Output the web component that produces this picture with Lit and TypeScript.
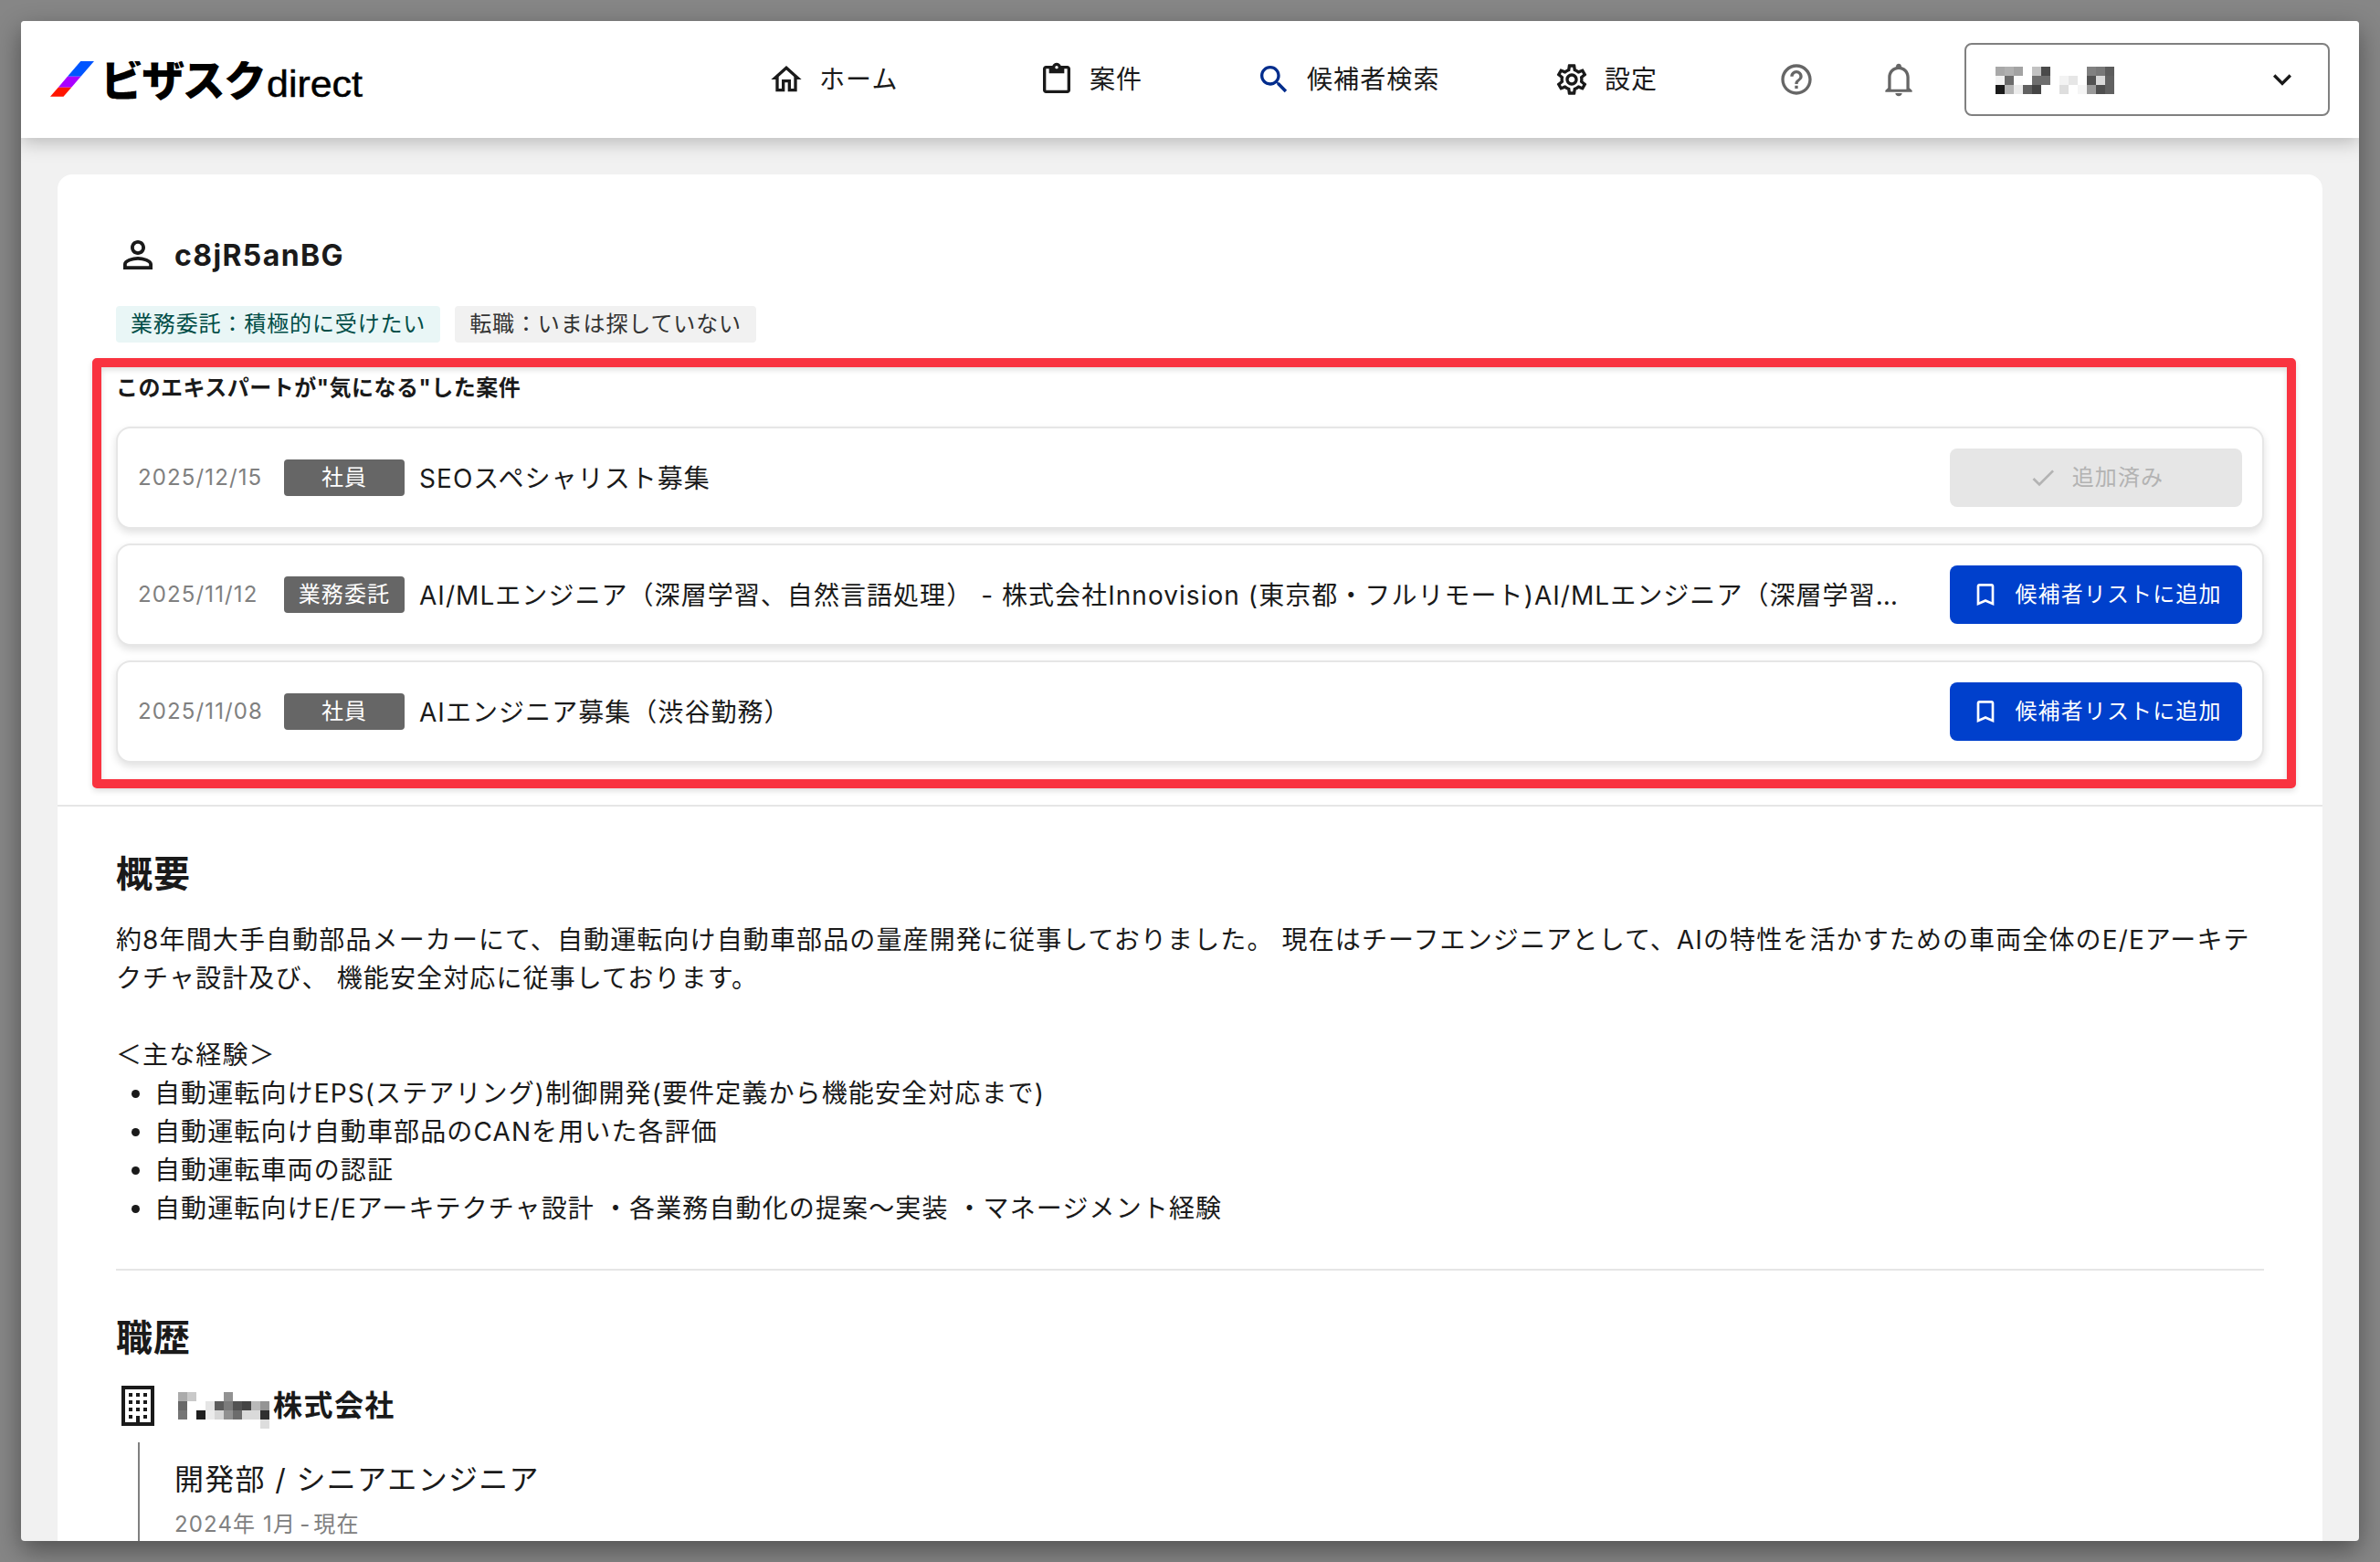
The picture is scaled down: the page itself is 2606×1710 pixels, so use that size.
import { LitElement, html, css, svg } from "lit";
import { customElement } from "lit/decorators.js";

const paths = {
  home: "M12 5.69l5 4.5V18h-2v-6H9v6H7v-7.81l5-4.5M12 3L2 12h3v8h6v-6h2v6h6v-8h3L12 3z",
  clip: "M19 3h-4.18C14.4 1.84 13.3 1 12 1S9.6 1.84 9.18 3H5c-1.1 0-2 .9-2 2v14c0 1.100.9 2 2 2h14c1.100 0 2-.9 2-2V5c0-1.100-.9-2-2-2zm-7 0c.55 0 1 .45 1 1s-.45 1-1 1-1-.45-1-1 .45-1 1-1zm7 16H5V5h2v3h10V5h2v14z",
  search: "M15.5 14h-.79l-.28-.27C15.410 12.590 16 11.110 16 9.500 16 5.910 13.090 3 9.500 3S3 5.910 3 9.500 5.910 16 9.500 16c1.610 0 3.090-.59 4.230-1.570l.27.28v.79l5 4.990L20.490 19l-4.990-5zm-6 0C7.010 14 5 11.990 5 9.500S7.010 5 9.500 5 14 7.010 14 9.500 11.990 14 9.500 14z",
  gear: "M19.430 12.980c.04-.32.07-.64.07-.98 0-.34-.03-.66-.07-.98l2.110-1.650c.19-.15.24-.42.12-.64l-2-3.460c-.09-.16-.26-.25-.44-.25-.06 0-.12.01-.17.03l-2.490 1c-.52-.4-1.080-.73-1.690-.98l-.38-2.650C14.460 2.180 14.250 2 14 2h-4c-.25 0-.46.18-.49.42l-.38 2.650c-.61.25-1.170.59-1.690.98l-2.490-1c-.06-.02-.12-.03-.18-.03-.17 0-.34.09-.43.25l-2 3.460c-.13.22-.07.49.12.64l2.110 1.650c-.04.32-.07.65-.07.98s.03.66.07.98l-2.110 1.650c-.19.15-.24.42-.12.64l2 3.460c.09.16.26.25.44.25.06 0 .12-.01.17-.03l2.490-1c.52.4 1.080.73 1.690.98l.38 2.650c.03.24.24.42.49.42h4c.25 0 .46-.18.49-.42l.38-2.650c.61-.25 1.170-.59 1.690-.98l2.490 1c.06.02.12.03.18.03.17 0 .34-.09.43-.25l2-3.460c.12-.22.07-.49-.12-.64l-2.110-1.650zm-1.980-1.710c.04.31.05.52.05.73 0 .21-.02.43-.05.73l-.14 1.130.89.7 1.080.84-.7 1.210-1.270-.51-1.040-.42-.9.68c-.43.32-.84.56-1.250.73l-1.060.43-.16 1.130-.2 1.350h-1.400l-.19-1.350-.16-1.130-1.060-.43c-.43-.18-.83-.41-1.230-.71l-.91-.7-1.060.43-1.270.51-.7-1.210 1.080-.84.89-.7-.14-1.130c-.03-.31-.05-.54-.05-.74s.02-.43.05-.73l.14-1.130-.89-.7-1.080-.84.7-1.210 1.270.51 1.040.42.9-.68c.43-.32.84-.56 1.250-.73l1.060-.43.16-1.130.2-1.350h1.390l.19 1.350.16 1.130 1.060.43c.43.18.83.41 1.230.71l.91.7 1.060-.43 1.270-.51.7 1.210-1.070.85-.89.7.14 1.130zM12 8c-2.210 0-4 1.790-4 4s1.790 4 4 4 4-1.790 4-4-1.790-4-4-4zm0 6c-1.100 0-2-.9-2-2s.9-2 2-2 2 .9 2 2-.9 2-2 2z",
  help: "M11 18h2v-2h-2v2zm1-16C6.480 2 2 6.480 2 12s4.480 10 10 10 10-4.480 10-10S17.520 2 12 2zm0 18c-4.410 0-8-3.590-8-8s3.590-8 8-8 8 3.590 8 8-3.590 8-8 8zm0-14c-2.210 0-4 1.790-4 4h2c0-1.100.9-2 2-2s2 .9 2 2c0 2-3 1.750-3 5h2c0-2.250 3-2.500 3-5 0-2.210-1.790-4-4-4z",
  bell: "M12 2.600C11.100 2.600 10.400 3.300 10.400 4.100V4.400C7.600 5.100 5.600 7.600 5.600 10.700V17L4 18.600V19.500H20V18.600L18.400 17V10.700C18.400 7.600 16.400 5.100 13.600 4.400V4.100C13.600 3.300 12.900 2.600 12 2.600zM7.400 17.900V10.700C7.400 8 9.400 6 12 6S16.600 8 16.600 10.700V17.900zM10 20.200H14C14 21.200 13.100 22 12 22S10 21.200 10 20.200z",
  down: "M16.590 8.590L12 13.170 7.410 8.590 6 10l6 6 6-6z",
  person: "M12 5.900c1.160 0 2.100.94 2.100 2.100s-.94 2.100-2.100 2.100S9.900 9.160 9.900 8s.94-2.100 2.100-2.100m0 9c2.970 0 6.100 1.460 6.100 2.100v1.100H5.900V17c0-.64 3.130-2.100 6.100-2.100M12 4C9.790 4 8 5.790 8 8s1.790 4 4 4 4-1.790 4-4-1.790-4-4-4zm0 9c-2.670 0-8 1.340-8 4v3h16v-3c0-2.660-5.330-4-8-4z",
  bookmark: "M17 3H7c-1.100 0-2 .9-2 2v16l7-3 7 3V5c0-1.100-.9-2-2-2zm0 15l-5-2.180L7 18V5h10v13z",
  check: "M9 16.170L4.830 12l-1.420 1.410L9 19 21 7l-1.410-1.410z",
  building: "M3 1H21V23H3zM5 3V21H11V17.500H13V21H19V3zM7 5H9V7H7zM11 5H13V7H11zM15 5H17V7H15zM7 9H9V11H7zM11 9H13V11H11zM15 9H17V11H15zM7 13H9V15H7zM11 13H13V15H11zM15 13H17V15H15zM7 17H9V19H7zM15 17H17V19H15z",
};
type Name = keyof typeof paths;

const icon = (name: Name, cls = "i40") =>
  html`<svg class="icon ${cls}" viewBox="0 0 24 24"><path fill-rule="evenodd" d=${paths[name]}></path></svg>`;

/* Redacted text drawn as a grid of grey cells; "" is transparent. */
const mosaic = (rows: string[][], w: number, h: number) => html`<svg
  class="mosaic" shape-rendering="crispEdges" width=${rows[0].length * w} height=${rows.length * h}>
  ${rows.map((r, y) => r.map((c, x) => (c ? svg`<rect x=${x * w} y=${y * h} width=${w} height=${h} fill=${"#" + c}></rect>` : null)))}
</svg>`;

const accountCells = [
  ["a8a8a8", "b0b0b0", "a3a3a3", "", "c2c2c2", "4a4a4a", "", "", "", "", "808080", "787878", "5c5c5c"],
  ["f2f2f2", "6b6b6b", "fcfcfc", "", "6e6e6e", "6e6e6e", "", "f3f3f3", "e6e6e6", "", "525252", "d9d9d9", "616161"],
  ["1a1a1a", "b5b5b5", "ebebeb", "616161", "454545", "", "", "dedede", "", "f5f5f5", "999999", "4f4f4f", "616161"],
];
const companyCells = [
  ["ababab", "c9c9c9", "", "", "", "929292", "", "", "", ""],
  ["686868", "", "", "e5e5e5", "5c5c5c", "7b7b7b", "525252", "444444", "b9b9b9", "949494"],
  ["757575", "", "1f1f1f", "ebebeb", "d6d6d6", "909090", "6c6c6c", "dadada", "dadada", "303030"],
  ["", "", "", "", "", "", "", "", "", "dddddd"],
];

const jobs = [
  { date: "2025/12/15", kind: "社員", title: "SEOスペシャリスト募集", added: true },
  {
    date: "2025/11/12",
    kind: "業務委託",
    title: "AI/MLエンジニア（深層学習、自然言語処理） - 株式会社Innovision (東京都・フルリモート)AI/MLエンジニア（深層学習、自然言語処理）",
    added: false,
  },
  { date: "2025/11/08", kind: "社員", title: "AIエンジニア募集（渋谷勤務）", added: false },
];

@customElement("app-root")
export class AppRoot extends LitElement {
  static styles = css`
    :host {
      display: block;
      box-sizing: border-box;
      width: 2606px;
      height: 1710px;
      padding: 23px;
      overflow: hidden;
      background: #868686;
      font-family: Inter, "Noto Sans CJK JP", sans-serif;
      font-size: 28px;
      line-height: 42px;
      letter-spacing: 0.04em;
      color: #1a1a1a;
    }
    * { box-sizing: border-box; }
    h1, h2, h3, p, ul { margin: 0; }
    .icon { flex: none; display: block; fill: currentColor; }
    .i32 { width: 32px; height: 32px; }
    .i40 { width: 40px; height: 40px; }
    .i44 { width: 44px; height: 44px; }
    .i48 { width: 48px; height: 48px; }
    .mosaic { display: block; flex: none; }
    .window {
      width: 2560px;
      height: 1664px;
      border-radius: 4px;
      background: #f1f1f1;
      box-shadow: 0 10px 28px rgba(0, 0, 0, 0.4);
    }
    .clip {
      height: 100%;
      overflow: hidden;
      border-radius: 4px;
      display: flex;
      flex-direction: column;
    }
    header {
      flex: none;
      height: 128px;
      padding: 0 32px;
      display: flex;
      align-items: center;
      background: #fff;
      box-shadow: 0 4px 20px rgba(0, 0, 0, 0.25);
    }
    .logo {
      display: block;
      width: 344px;
      height: 56px;
      margin-right: 442px;
      flex: none;
      overflow: visible;
      clip-path: inset(8px -4px -12px -4px);
    }
    .logo .jp { font: 900 47px "Noto Sans CJK JP", sans-serif; letter-spacing: 0; }
    .logo .en {
      font: 400 40px "Liberation Sans", sans-serif;
      letter-spacing: 0;
      stroke: #000;
      stroke-width: 0.5px;
    }
    .nav { display: flex; align-items: center; gap: 16px; white-space: nowrap; }
    .n1 { width: 296px; }
    .n2 { width: 238px; }
    .n3 { width: 326px; }
    .n4 { width: 246px; }
    .blue { color: #002c8c; }
    .grey { color: #666; }
    .bell { margin: 0 50px 0 70px; }
    .select {
      width: 400px;
      height: 80px;
      border: 2px solid #808080;
      border-radius: 8px;
      padding: 0 30px 0 32px;
      display: flex;
      align-items: center;
      justify-content: space-between;
    }
    .select .mosaic { margin-top: 2px; }
    .card {
      flex: 1;
      margin: 40px 40px 0;
      border-radius: 16px 16px 0 0;
      background: #fff;
    }
    .profile { height: 692px; padding: 64px 64px 0; border-bottom: 2px solid #e6e6e6; }
    .name {
      display: flex;
      align-items: center;
      gap: 16px;
      height: 48px;
      font-size: 32px;
      font-weight: 700;
      letter-spacing: 0.043em;
    }
    .name span { padding-top: 2px; }
    .tags { display: flex; gap: 16px; margin-top: 32px; }
    .tag {
      height: 40px;
      padding: 0 16px;
      border-radius: 4px;
      background: #f1f1f1;
      color: #333;
      font-size: 24px;
      line-height: 39px;
      letter-spacing: 0.036em;
    }
    .tag.green { background: #e9f6f6; color: #004d47; }
    .highlight {
      height: 471px;
      width: 2413px;
      margin: 17px 0 0 -26px;
      padding: 5px 24px 0 16px;
      border: 10px solid #f93340;
      border-radius: 5px;
      box-shadow: 0 3px 6px rgba(0, 0, 0, 0.13), inset 0 3px 6px rgba(0, 0, 0, 0.13);
    }
    .highlight h3 { font-size: 24px; line-height: 36px; letter-spacing: 0.021em; }
    .jobs { margin-top: 24px; display: flex; flex-direction: column; gap: 16px; }
    .job {
      width: 2352px;
      height: 112px;
      padding: 0 22px;
      border: 2px solid #e6e6e6;
      border-radius: 16px;
      box-shadow: 0 4px 8px rgba(0, 0, 0, 0.12);
      background: #fff;
      display: flex;
      align-items: center;
    }
    .date { width: 160px; font-size: 24px; color: #808080; }
    .kind {
      width: 132px;
      height: 40px;
      border-radius: 4px;
      background: #666;
      color: #fff;
      font-size: 24px;
      line-height: 39px;
      text-align: center;
      flex: none;
    }
    .title {
      flex: 1;
      min-width: 0;
      margin: 0 48px 0 16px;
      padding-top: 2px;
      overflow: hidden;
      white-space: nowrap;
      text-overflow: ellipsis;
      letter-spacing: 0.0375em;
    }
    .btn {
      width: 320px;
      height: 64px;
      padding-left: 1px;
      flex: none;
      border-radius: 8px;
      background: #0040cc;
      color: #fff;
      font-size: 24px;
      display: flex;
      align-items: center;
      justify-content: center;
      gap: 16px;
      white-space: nowrap;
    }
    .btn.off { background: #e6e6e6; color: #b3b3b3; padding-left: 0; }
    .section { margin: 0 64px; padding-top: 44px; }
    .section h2 { font-size: 40px; line-height: 60px; }
    .about { height: 508px; border-bottom: 2px solid #e6e6e6; }
    .about .body { margin-top: 21px; }
    .about ul { padding-left: 42px; }
    .company {
      display: flex;
      align-items: center;
      height: 48px;
      margin-top: 20px;
      font-size: 32px;
      font-weight: 700;
      letter-spacing: 0.045em;
    }
    .company .mosaic { margin: 9px 4px 0 20px; }
    .role { margin: 16px 0 0 24px; padding: 17px 0 100px 38px; border-left: 2px solid #808080; }
    .role .post { font-size: 32px; line-height: 48px; letter-spacing: 0.041em; }
    .role .term { margin-top: 7px; font-size: 24px; line-height: 36px; color: #808080; }
    .tight { letter-spacing: 0; word-spacing: -2.6px; }
  `;

  render() {
    return html`
      <div class="window"><div class="clip">
        <header>
          <svg class="logo" viewBox="0 0 344 56">
            <path fill="#0055ff" d="M33.300 8H48L33.500 24.800H18.900z"></path>
            <path fill="#aa00ff" d="M18.900 24.800H33.500L23.200 36.700H8.700z"></path>
            <path fill="#ff1500" d="M8.700 36.700H23.200L14.500 46.800H0z"></path>
            <text class="jp" x="55" y="45.500" textLength="182">ビザスク</text>
            <text class="en" x="237" y="46.800" textLength="105" lengthAdjust="spacingAndGlyphs">direct</text>
          </svg>
          <div class="nav n1">${icon("home")}<span>ホーム</span></div>
          <div class="nav n2">${icon("clip")}<span>案件</span></div>
          <div class="nav n3"><span class="blue">${icon("search")}</span><span>候補者検索</span></div>
          <div class="nav n4">${icon("gear")}<span>設定</span></div>
          <span class="grey">${icon("help")}</span>
          <span class="grey bell">${icon("bell", "i44")}</span>
          <div class="select">${mosaic(accountCells, 10, 10)}${icon("down")}</div>
        </header>
        <main class="card">
          <section class="profile">
            <h1 class="name">${icon("person", "i48")}<span>c8jR5anBG</span></h1>
            <div class="tags">
              <span class="tag green">業務委託：積極的に受けたい</span>
              <span class="tag">転職：いまは探していない</span>
            </div>
            <div class="highlight">
              <h3>このエキスパートが"気になる"した案件</h3>
              <div class="jobs">
                ${jobs.map(
                  (j) => html`<div class="job">
                    <span class="date">${j.date}</span>
                    <span class="kind">${j.kind}</span>
                    <span class="title">${j.title}</span>
                    <span class="btn ${j.added ? "off" : ""}">${icon(j.added ? "check" : "bookmark", "i32")}<span>${j.added ? "追加済み" : "候補者リストに追加"}</span></span>
                  </div>`,
                )}
              </div>
            </div>
          </section>
          <section class="section about">
            <h2>概要</h2>
            <div class="body">
              <p>約8年間大手自動部品メーカーにて、自動運転向け自動車部品の量産開発に従事しておりました。 現在はチーフエンジニアとして、AIの特性を活かすための車両全体のE/Eアーキテクチャ設計及び、 機能安全対応に従事しております。</p>
              <br />
              <p>＜主な経験＞</p>
              <ul>
                <li>自動運転向けEPS(ステアリング)制御開発(要件定義から機能安全対応まで)</li>
                <li>自動運転向け自動車部品のCANを用いた各評価</li>
                <li>自動運転車両の認証</li>
                <li>自動運転向けE/Eアーキテクチャ設計 ・各業務自動化の提案〜実装 ・マネージメント経験</li>
              </ul>
            </div>
          </section>
          <section class="section">
            <h2>職歴</h2>
            <div class="company">${icon("building", "i48")}${mosaic(companyCells, 10, 10)}<span>株式会社</span></div>
            <div class="role">
              <div class="post">開発部 / シニアエンジニア</div>
              <div class="term">2024年 1月<span class="tight"> - </span>現在</div>
            </div>
          </section>
        </main>
      </div></div>
    `;
  }
}
